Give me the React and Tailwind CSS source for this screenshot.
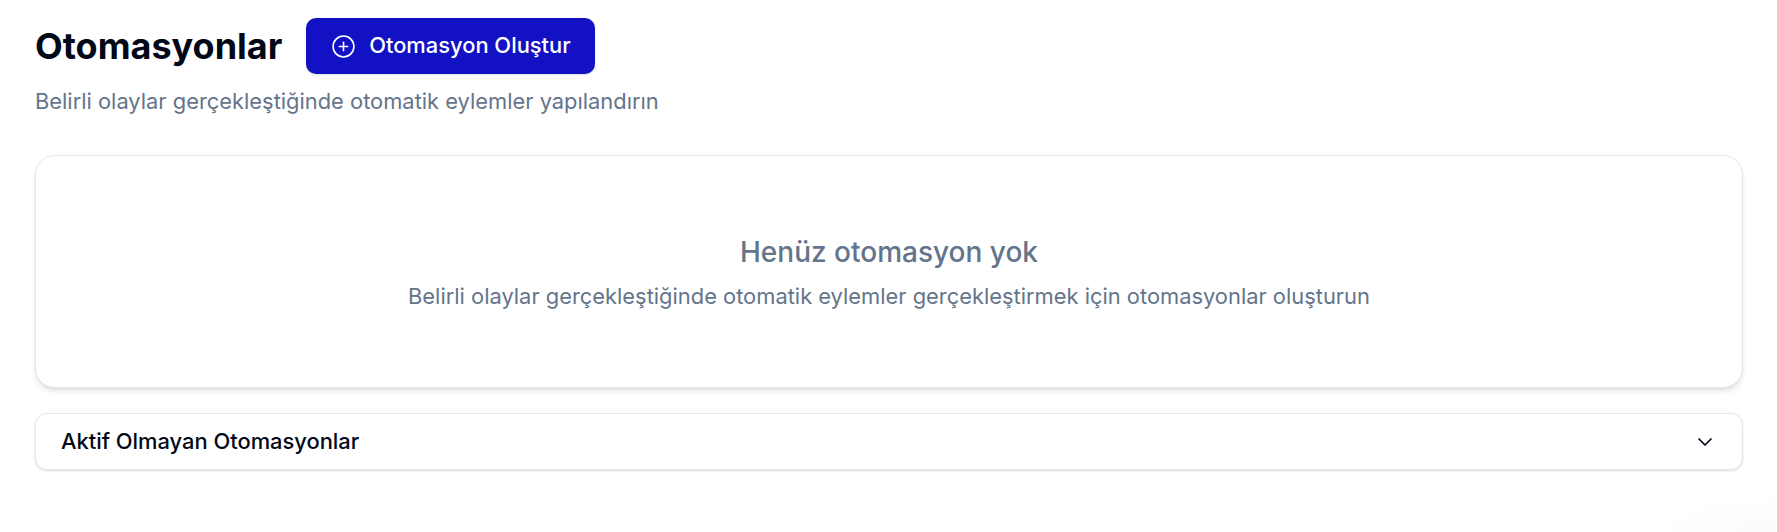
import React from "react";
import { ChevronDown, CirclePlus } from "lucide-react";

export default function App() {
  return (
    <div className="min-h-[532px] bg-white bg-[radial-gradient(ellipse_at_100%_100%,#fbfbfb_0,#ffffff_125px)] pt-[18px] pr-[34px] pl-[35px] font-['Inter',sans-serif]">
      <div className="flex items-center gap-[24px]">
        <h1 className="text-[36px] leading-[40px] font-bold text-[#020817]">Otomasyonlar</h1>
        <button className="flex h-[56px] w-[289px] items-center justify-center gap-[13px] rounded-[10px] bg-[#1212c4] pb-[1px] text-[21.88px] font-medium text-white shadow-sm">
          <CirclePlus size={25} strokeWidth={1.5} className="mt-[1px]" />
          Otomasyon Oluştur
        </button>
      </div>
      <p className="mt-[13px] text-[21.88px] leading-[28px] text-[#64748b]">Belirli olaylar gerçekleştiğinde otomatik eylemler yapılandırın</p>
      <div className="mt-[40px] flex h-[233px] flex-col items-center justify-center rounded-[20px] border border-[#e2e8f0] bg-white pt-[2px] shadow-md">
        <h2 className="text-[28px] leading-[32px] font-medium text-[#64748b]">Henüz otomasyon yok</h2>
        <p className="mt-[14px] text-[21.88px] leading-[28px] text-[#64748b]">Belirli olaylar gerçekleştiğinde otomatik eylemler gerçekleştirmek için otomasyonlar oluşturun</p>
      </div>
      <div className="mt-[25px] flex h-[57px] items-center justify-between rounded-[12px] border border-[#e2e8f0] bg-white px-[25px] shadow-sm">
        <span className="text-[21.88px] font-medium text-[#020817]">Aktif Olmayan Otomasyonlar</span>
        <ChevronDown size={24} strokeWidth={1.75} className="text-[#020817]" />
      </div>
    </div>
  );
}
